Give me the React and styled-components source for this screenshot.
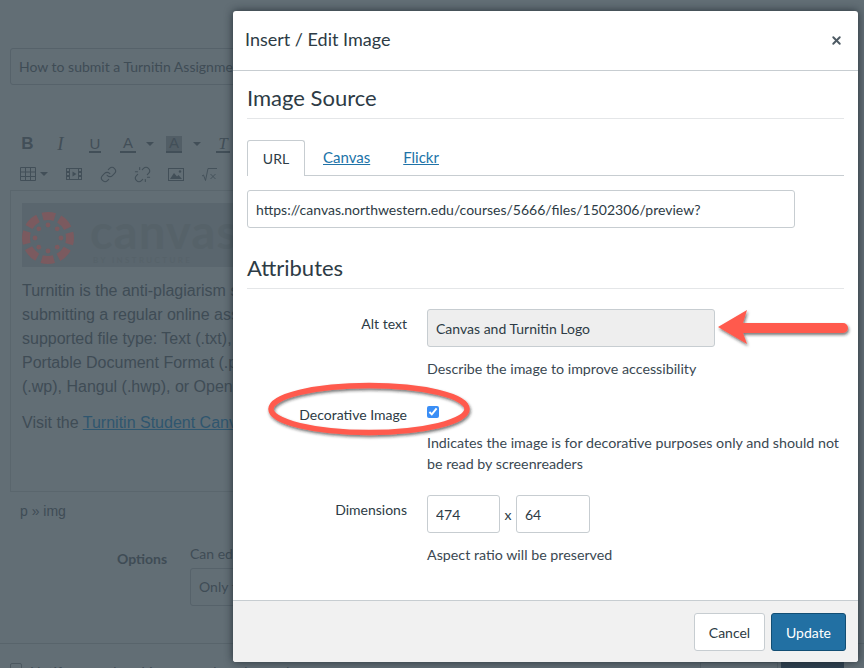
import React from "react";
import styled, { createGlobalStyle } from "styled-components";
import { Link, Unlink, X } from "lucide-react";

const GlobalStyle = createGlobalStyle`
  html, body {
    margin: 0;
    padding: 0;
    width: 864px;
    height: 668px;
    overflow: hidden;
    background: #626e75;
    font-family: "Lato", "Liberation Sans", sans-serif;
  }
  * { box-sizing: border-box; }
`;

const Page = styled.div`
  position: relative;
  width: 864px;
  height: 668px;
  overflow: hidden;
  background: #626e75;
  color: #3f4c55;
`;

/* dimmed page behind the dialog */
const Behind = styled.div`
  width: 1000px;
  padding: 48px 0 0 10px;
  display: flex;
  flex-direction: column;
`;

const TitleField = styled.div`
  width: 400px;
  height: 37px;
  border: 1px solid #56626a;
  border-radius: 3px;
  padding-left: 8px;
  font-size: 14px;
  line-height: 35px;
  white-space: nowrap;
`;

const ToolRow = styled.div`
  display: flex;
  align-items: center;
  height: 30px;
`;

const FirstToolRow = styled(ToolRow)`
  margin-top: 44px;
`;

const SecondToolRow = styled(ToolRow)`
  padding-left: 10px;
`;

const Tool = styled.div`
  flex: none;
  width: ${(p) => p.$w}px;
  height: 24px;
  display: flex;
  align-items: center;
  justify-content: center;
  color: #424f58;
`;

const TableTool = styled.div`
  flex: none;
  width: 37px;
  display: flex;
  align-items: center;
  gap: 4px;
  color: #424f58;
`;

const BoldGlyph = styled.span`
  font: bold 17px "Liberation Sans", sans-serif;
`;

const ItalicGlyph = styled.span`
  font: italic 19px "Liberation Serif", serif;
`;

const UnderGlyph = styled.span`
  font: 15px/15px "Liberation Sans", sans-serif;
  border-bottom: 2px solid #424f58;
  padding: 0 1px;
`;

const ColorGlyph = styled.span`
  width: 16px;
  height: 17px;
  font: 15px/14px "Liberation Sans", sans-serif;
  text-align: center;
  border-bottom: 2px solid #424f58;
  background: ${(p) => (p.$filled ? "#525e66" : "transparent")};
`;

const ClearGlyph = styled.span`
  font: italic 17px/15px "Liberation Serif", serif;
  border-bottom: 2px solid #424f58;
  padding: 0 2px;
`;

const Caret = styled.span`
  width: 0;
  height: 0;
  border-left: 4px solid transparent;
  border-right: 4px solid transparent;
  border-top: 4px solid #424f58;
`;

const Editor = styled.div`
  width: 700px;
  height: 302px;
  margin-top: 1px;
  border: 1px solid #5a666d;
  padding: 12px 11px;
  font: 16px/24px "Liberation Sans", sans-serif;
`;

const Banner = styled.div`
  height: 64px;
  background: #5a666e;
  display: flex;
  gap: 16px;
  margin-bottom: 12px;
`;

const MarkSlot = styled.div`
  flex: none;
  padding-top: 9px;
`;

const LogoWords = styled.div`
  display: flex;
  flex-direction: column;
  padding-top: 5px;
  font-family: "Lato", sans-serif;
  color: #566269;
`;

const LogoName = styled.div`
  height: 47px;
  font-size: 47px;
  line-height: 47px;
  font-weight: 700;
  letter-spacing: 1.200px;
`;

const LogoBy = styled.div`
  margin-top: 1px;
  font-size: 8px;
  line-height: 9px;
  letter-spacing: 2.400px;
  padding-left: 3px;
  white-space: nowrap;
`;

const Para = styled.p`
  margin: 0 0 12px;
  white-space: nowrap;
`;

const PageLink = styled.a`
  color: #2f566f;
  text-decoration: underline;
`;

const Path = styled.div`
  margin: 9px 0 0 10px;
  font: 14px/20px "Liberation Sans", sans-serif;
`;

const OptionsRow = styled.div`
  display: flex;
  gap: 20px;
  margin: 23px 0 0 107px;
`;

const OptionsLabel = styled.div`
  width: 53px;
  padding-top: 5px;
  font-size: 14px;
  font-weight: 700;
  line-height: 20px;
`;

const OptionsBody = styled.div`
  font-size: 14px;
  line-height: 20px;
`;

const SelectBox = styled.div`
  width: 300px;
  height: 38px;
  margin-top: 4px;
  border: 1px solid #56626a;
  border-radius: 3px;
  padding-left: 8px;
  line-height: 36px;
`;

const Rule = styled.div`
  width: 864px;
  height: 1px;
  margin: 37px 0 0 -10px;
  background: #58646b;
`;

const NotifyRow = styled.div`
  display: flex;
  align-items: flex-start;
  margin-top: 18px;
  width: 854px;
  font-size: 14px;
  line-height: 20px;
`;

const NotifyBox = styled.span`
  width: 12px;
  height: 12px;
  margin: 1px 8px 0 0;
  border: 1px solid #4c5860;
  border-radius: 2px;
`;

const NotifyExtra = styled.div`
  display: flex;
  gap: 3px;
  margin-left: auto;
  margin-right: 20px;
`;

const GhostBtn = styled.span`
  width: 78px;
  height: 38px;
  border: 1px solid #56626a;
`;

const DarkBtn = styled.span`
  width: 63px;
  height: 38px;
  background: #2f4150;
`;

/* dialog */
const Modal = styled.div`
  position: absolute;
  left: 233px;
  top: 11px;
  width: 625px;
  height: 651px;
  background: #fff;
  border-radius: 3px;
  box-shadow: 0 0 8px rgba(20, 30, 38, 0.75);
  display: flex;
  flex-direction: column;
  color: #2d3b45;
`;

const Header = styled.header`
  height: 60px;
  flex: none;
  padding: 0 15px 0 12px;
  border-bottom: 1px solid #c7cdd1;
  display: flex;
  align-items: center;
  justify-content: space-between;
`;

const Title = styled.h1`
  margin: 0 0 3px;
  font-size: 18px;
  font-weight: 400;
`;

const Body = styled.div`
  flex: 1;
  padding: 0 14px;
`;

const Section = styled.h2`
  margin: 0;
  height: 48px;
  padding-top: 13px;
  font-size: 22px;
  line-height: 27px;
  font-weight: 400;
  border-bottom: 1px solid #e4e6e8;
`;

const Tabs = styled.div`
  display: flex;
  height: 36px;
  margin-top: 21px;
  border-bottom: 1px solid #c7cdd1;
`;

const ActiveTab = styled.div`
  width: 58px;
  height: 36px;
  border: 1px solid #c7cdd1;
  border-bottom: 0;
  border-radius: 3px 3px 0 0;
  background: #fff;
  text-align: center;
  font-size: 14px;
  line-height: 35px;
`;

const TabLink = styled.a`
  margin-left: 18px;
  margin-right: 15px;
  color: #2073a8;
  text-decoration: underline;
  font-size: 15px;
  line-height: 35px;
`;

const TextField = styled.input`
  display: block;
  width: ${(p) => p.$w}px;
  height: 38px;
  padding: 0 8px;
  border: 1px solid #c7cdd1;
  border-radius: 3px;
  background: ${(p) => (p.$grey ? "#eeeeee" : "#fff")};
  color: #2d3b45;
  font: 14px "Lato", sans-serif;
  outline: none;
`;

const UrlField = styled(TextField)`
  margin-top: 14px;
`;

const AttributesHead = styled(Section)`
  margin-top: 13px;
`;

const FormRow = styled.div`
  display: grid;
  grid-template-columns: 160px 1fr;
  column-gap: 20px;
  margin-top: ${(p) => p.$top}px;
`;

const Label = styled.div`
  padding-top: ${(p) => p.$pad ?? 5}px;
  text-align: right;
  font-size: 14px;
  line-height: 20px;
`;

const Help = styled.div`
  margin-top: ${(p) => p.$top ?? 11}px;
  font-size: 14.250px;
  line-height: 21px;
  color: #3a4852;
`;

const Check = styled.input`
  display: block;
  width: 12px;
  height: 12px;
  margin: 1px 0 0;
  accent-color: #3a8ef6;
`;

const SizeRow = styled.div`
  display: flex;
  align-items: center;
`;

const Times = styled.span`
  width: 16px;
  text-align: center;
  font-size: 14px;
`;

const Footer = styled.footer`
  height: 62px;
  flex: none;
  padding: 12px;
  display: flex;
  justify-content: flex-end;
  gap: 6px;
  background: #f1f1f1;
  border-top: 1px solid #c7cdd1;
  border-radius: 0 0 3px 3px;
`;

const Button = styled.button`
  height: 38px;
  width: ${(p) => p.$w}px;
  border: 1px solid ${(p) => (p.$primary ? "#124e74" : "#c7cdd1")};
  border-radius: 3px;
  background: ${(p) => (p.$primary ? "#2270a3" : "#fff")};
  color: ${(p) => (p.$primary ? "#fff" : "#2d3b45")};
  font: 14px "Lato", sans-serif;
  padding: 0;
`;

const CloseBtn = styled.span`
  display: flex;
  color: #4d5a63;
`;

/* red markup drawn over the screenshot */
const Markup = styled.svg`
  position: absolute;
  left: 0;
  top: 0;
  pointer-events: none;
`;

const TableIcon = () => (
  <svg width="16" height="14" viewBox="0 0 16 14" fill="none" stroke="currentColor">
    <path d="M.5.5h15v13H.5zM.5 5h15M.5 9.500h15M5.500.5v13M10.500.5v13" />
  </svg>
);

const FilmIcon = () => (
  <svg width="16" height="12" viewBox="0 0 16 12">
    <path
      fillRule="evenodd"
      fill="currentColor"
      d="M0 0h16v12H0zM1 1v2h2V1zM13 1v2h2V1zM1 5v2h2V5zM13 5v2h2V5zM1 9v2h2V9zM13 9v2h2V9zM4 1v10h8V1z"
    />
    <path fill="currentColor" d="M6.500 3.500l4 2.500-4 2.500z" />
  </svg>
);

const PictureIcon = () => (
  <svg width="16" height="13" viewBox="0 0 16 13">
    <path fillRule="evenodd" fill="currentColor" d="M0 0h16v13H0zM1 1v11h14V1z" />
    <path fill="currentColor" d="M2 11l4-6 3 3.500 1.500-1.500 3.500 4z" />
    <circle cx="12" cy="3.500" r="1.200" fill="currentColor" />
  </svg>
);

const RootIcon = () => (
  <svg width="16" height="13" viewBox="0 0 16 13" fill="none" stroke="currentColor" strokeWidth=".9">
    <path d="M0 8l1.500-1 2 5.500L6 .5h9M8.500 6l5 5M13.500 6l-5 5" />
  </svg>
);

const CanvasMark = () => {
  const spots = [0, 45, 90, 135, 180, 225, 270, 315];
  return (
    <svg width="52" height="52" viewBox="-26 -26 52 52">
      <circle
        r="22"
        fill="none"
        stroke="#7b5a5f"
        strokeWidth="8"
        strokeDasharray="12.500 4.780"
        strokeDashoffset="6.250"
      />
      {spots.map((a) => (
        <circle
          key={a}
          r="2.400"
          fill="#7b5a5f"
          cx={13 * Math.cos((a * Math.PI) / 180)}
          cy={13 * Math.sin((a * Math.PI) / 180)}
        />
      ))}
    </svg>
  );
};

const App = () => {
  return (
    <Page>
      <GlobalStyle />
      <Behind>
        <TitleField>How to submit a Turnitin Assignment</TitleField>
        <FirstToolRow>
          <Tool $w={35}><BoldGlyph>B</BoldGlyph></Tool>
          <Tool $w={31}><ItalicGlyph>I</ItalicGlyph></Tool>
          <Tool $w={38}><UnderGlyph>U</UnderGlyph></Tool>
          <Tool $w={28}><ColorGlyph>A</ColorGlyph></Tool>
          <Tool $w={16}><Caret /></Tool>
          <Tool $w={32}><ColorGlyph $filled>A</ColorGlyph></Tool>
          <Tool $w={14}><Caret /></Tool>
          <Tool $w={38}><ClearGlyph>T</ClearGlyph></Tool>
        </FirstToolRow>
        <SecondToolRow>
          <TableTool><TableIcon /><Caret /></TableTool>
          <Tool $w={34}><FilmIcon /></Tool>
          <Tool $w={34}><Link size={17} strokeWidth={1.500} /></Tool>
          <Tool $w={34}><Unlink size={17} strokeWidth={1.500} /></Tool>
          <Tool $w={34}><PictureIcon /></Tool>
          <Tool $w={34}><RootIcon /></Tool>
        </SecondToolRow>
        <Editor>
          <Banner>
            <MarkSlot><CanvasMark /></MarkSlot>
            <LogoWords>
              <LogoName>canvas</LogoName>
              <LogoBy>BY INSTRUCTURE</LogoBy>
            </LogoWords>
          </Banner>
          <Para>
            Turnitin is the anti-plagiarism service
            <br />
            submitting a regular online assignment
            <br />
            supported file type: Text (.txt), Rich Text
            <br />
            Portable Document Format (.pdf)
            <br />
            (.wp), Hangul (.hwp), or OpenOffice
          </Para>
          <Para>
            Visit the <PageLink>Turnitin Student Canvas Guide</PageLink>
          </Para>
        </Editor>
        <Path>p » img</Path>
        <OptionsRow>
          <OptionsLabel>Options</OptionsLabel>
          <OptionsBody>
            Can edit this page
            <SelectBox>Only teachers</SelectBox>
          </OptionsBody>
        </OptionsRow>
        <Rule />
        <NotifyRow>
          <NotifyBox />
          Notify users that this content has changed
          <NotifyExtra>
            <GhostBtn />
            <DarkBtn />
          </NotifyExtra>
        </NotifyRow>
      </Behind>

      <Modal>
        <Header>
          <Title>Insert / Edit Image</Title>
          <CloseBtn><X size={13} strokeWidth={3.500} /></CloseBtn>
        </Header>
        <Body>
          <Section>Image Source</Section>
          <Tabs>
            <ActiveTab>URL</ActiveTab>
            <TabLink>Canvas</TabLink>
            <TabLink>Flickr</TabLink>
          </Tabs>
          <UrlField
            $w={548}
            readOnly
            value="https://canvas.northwestern.edu/courses/5666/files/1502306/preview?"
          />
          <AttributesHead>Attributes</AttributesHead>
          <FormRow $top={20}>
            <Label>Alt text</Label>
            <div>
              <TextField $w={288} $grey readOnly value="Canvas and Turnitin Logo" />
              <Help>Describe the image to improve accessibility</Help>
            </div>
          </FormRow>
          <FormRow $top={26}>
            <Label $pad={0}>Decorative Image</Label>
            <div>
              <Check type="checkbox" defaultChecked />
              <Help $top={14}>
                Indicates the image is for decorative purposes only and should not be read by
                screenreaders
              </Help>
            </div>
          </FormRow>
          <FormRow $top={21}>
            <Label>Dimensions</Label>
            <div>
              <SizeRow>
                <TextField $w={73} readOnly value="474" />
                <Times>x</Times>
                <TextField $w={74} readOnly value="64" />
              </SizeRow>
              <Help>Aspect ratio will be preserved</Help>
            </div>
          </FormRow>
        </Body>
        <Footer>
          <Button $w={71}>Cancel</Button>
          <Button $w={75} $primary>Update</Button>
        </Footer>
      </Modal>

      <Markup width="864" height="668" viewBox="0 0 864 668">
        <defs>
          <filter id="drop" x="-20%" y="-40%" width="140%" height="180%">
            <feDropShadow dx="1" dy="2" stdDeviation="1.500" floodColor="#1c1c1c" floodOpacity=".6" />
          </filter>
        </defs>
        <path
          filter="url(#drop)"
          fill="#ff5a4d"
          d="M718 327L747 310L743 323L843 323A5 5 0 0 1 843 333L743 333L747 344Z"
        />
        <ellipse
          filter="url(#drop)"
          cx="369"
          cy="409"
          rx="98"
          ry="23.500"
          fill="none"
          stroke="#ff5a4d"
          strokeWidth="5.500"
        />
      </Markup>
    </Page>
  );
};

export default App;
